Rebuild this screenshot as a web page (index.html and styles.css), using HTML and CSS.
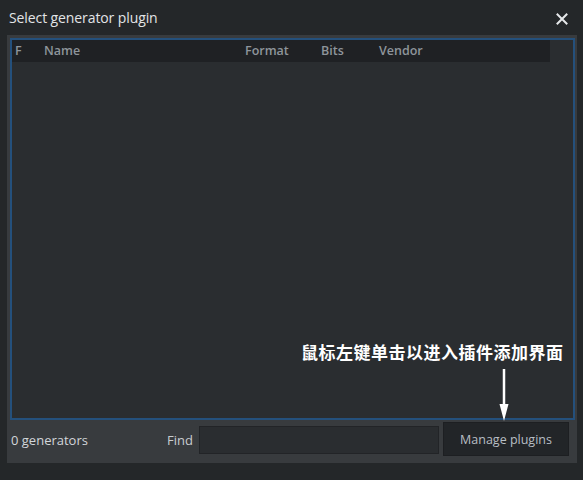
FILE: index.html
```html
<!DOCTYPE html>
<html>
<head>
<meta charset="utf-8">
<link rel="stylesheet" href="styles.css">
</head>
<body>
<div class="window">
  <div class="titlebar">
    <span class="title">Select generator plugin</span>
    <svg class="close" width="12" height="12" viewBox="0 0 12 12"><path d="M1.5 1.5L10.5 10.5M10.5 1.5L1.5 10.5" stroke="#e6e8ea" stroke-width="2" stroke-linecap="square"/></svg>
  </div>
  <div class="panel">
    <div class="list">
      <div class="header">
        <span class="col c-f">F</span>
        <span class="col c-name">Name</span>
        <span class="col c-format">Format</span>
        <span class="col c-bits">Bits</span>
        <span class="col c-vendor">Vendor</span>
      </div>
      <div class="annot">
        <div class="note">鼠标左键单击以进入插件添加界面</div>
        <svg class="arrow" width="12" height="54" viewBox="0 0 12 54"><path d="M6 0V42" stroke="#ffffff" stroke-width="2.5"/><path d="M1.5 35L6 52L10.5 35Z" fill="#ffffff"/></svg>
      </div>
    </div>
    <div class="bottom">
      <span class="count">0 generators</span>
      <span class="find">Find</span>
      <div class="input"></div>
      <div class="btn">Manage plugins</div>
    </div>
  </div>
</div>
</body>
</html>
```
FILE: styles.css
```css
html, body {
  margin: 0;
  padding: 0;
  background: #232629;
}
body {
  width: 583px;
  height: 480px;
  overflow: hidden;
  font-family: "Open Sans", "Noto Sans", sans-serif;
}
.window {
  width: 583px;
  height: 480px;
  display: flex;
  flex-direction: column;
  background: #242729;
}
.titlebar {
  height: 35px;
  display: flex;
  align-items: center;
  justify-content: space-between;
  padding: 0 15px 0 9px;
  box-sizing: border-box;
}
.title {
  color: #e2e4e6;
  font-size: 14px;
  letter-spacing: -0.1px;
  margin-top: -1px;
}
.close {
  margin-top: 3px;
}
.panel {
  margin: 0 6px 0 7px;
  height: 428px;
  background: #383b3e;
  display: flex;
  flex-direction: column;
  padding: 3px 2px 0 3px;
  box-sizing: border-box;
}
.list {
  height: 382px;
  border: 2px solid #24507c;
  background: #2a2d30;
  box-sizing: border-box;
  position: relative;
}
.header {
  width: 538px;
  height: 22px;
  background: #1f2124;
  display: flex;
  align-items: center;
  color: #8e959b;
  font-size: 12.5px;
  font-weight: 600;
  position: relative;
}
.col {
  position: absolute;
  top: 2px;
}
.c-f { left: 3px; }
.c-name { left: 32px; }
.c-format { left: 233px; }
.c-bits { left: 309px; }
.c-vendor { left: 367px; }
.annot {
  position: absolute;
  left: 289px;
  top: 300px;
  width: 280px;
}
.note {
  color: #ffffff;
  font-family: "Noto Sans CJK SC", sans-serif;
  font-weight: 700;
  font-size: 17px;
  letter-spacing: 0.5px;
  line-height: 24px;
  white-space: nowrap;
}
.arrow {
  position: absolute;
  left: 197px;
  top: 29px;
}
.bottom {
  flex: 1;
  display: flex;
  align-items: center;
  padding: 0 5px 4px 1px;
  font-size: 13px;
}
.count {
  color: #d2d6da;
  width: 156px;
}
.find {
  color: #c8ccd0;
  width: 32px;
}
.input {
  width: 240px;
  height: 28px;
  background: #2a2d30;
  border: 1px solid #222427;
  box-sizing: border-box;
  margin-right: 4px;
}
.btn {
  width: 126px;
  height: 34px;
  background: #222528;
  border: 1px solid #1d1f22;
  box-sizing: border-box;
  color: #b8bec4;
  font-size: 12.5px;
  display: flex;
  align-items: center;
  justify-content: center;
  margin-top: -1px;
}
```
